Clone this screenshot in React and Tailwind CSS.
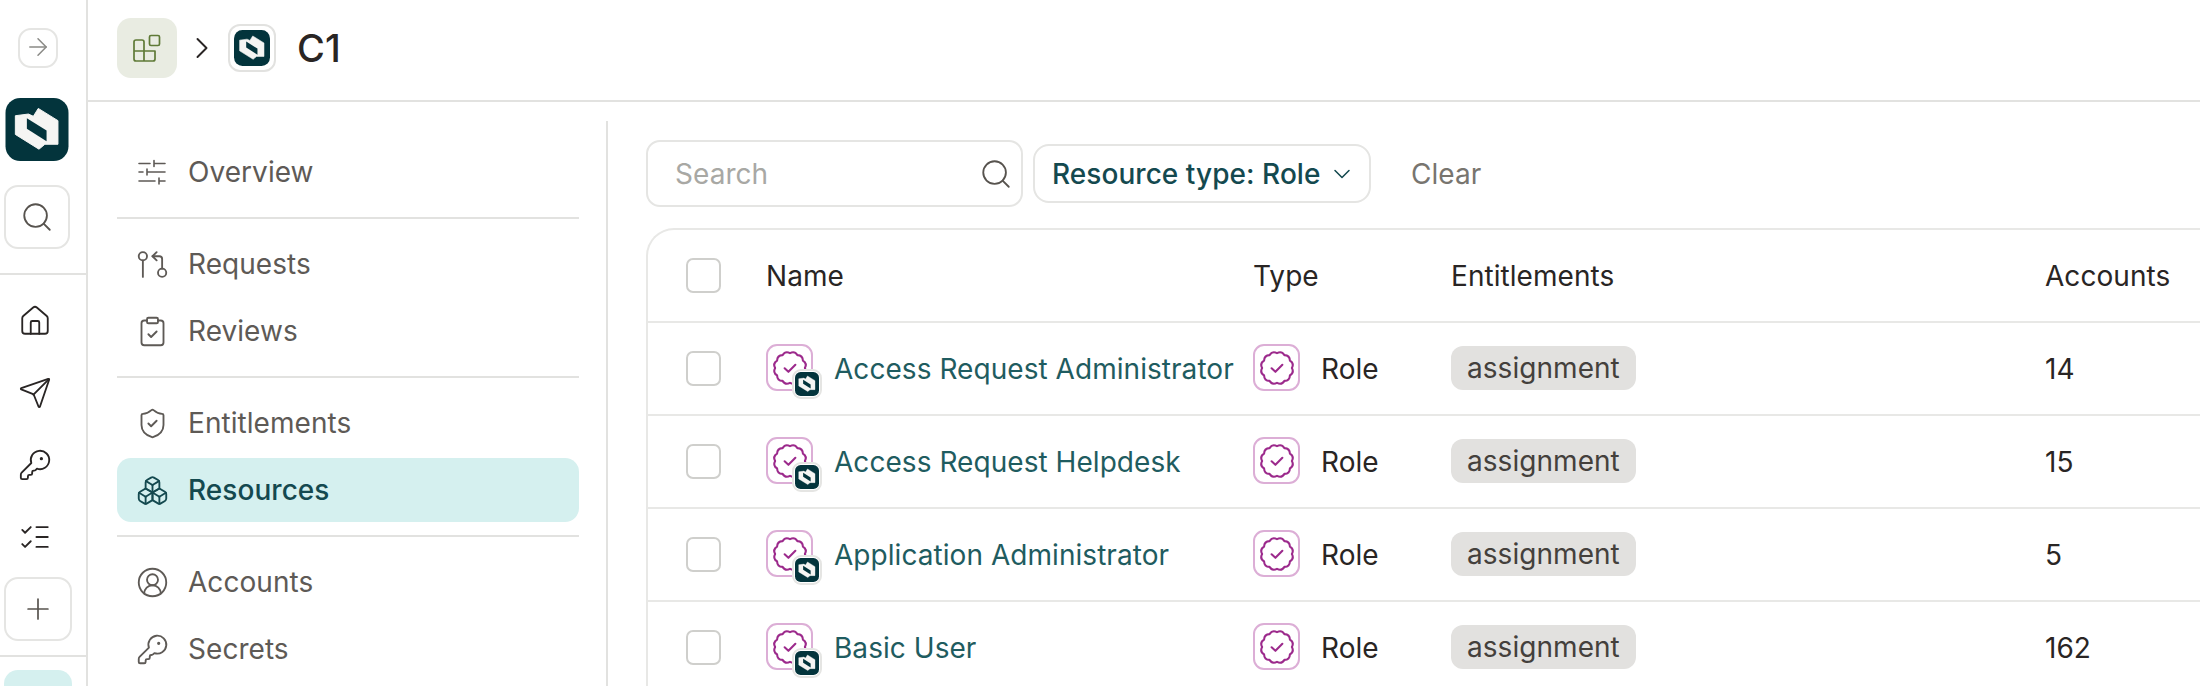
import React from "react";
import {
  ArrowRight,
  Search,
  House,
  Send,
  KeyRound,
  ListChecks,
  Plus,
  ChevronRight,
  ChevronDown,
  GitPullRequestArrow,
  ClipboardCheck,
  ShieldCheck,
  Boxes,
  CircleUserRound,
} from "lucide-react";

const Logo = ({ className }) => (
  <svg viewBox="0 0 64 64" className={className}>
    <rect width="64" height="64" rx="15" fill="#03343c" />
    <path
      d="M10 18L23.3 16.3L28.3 18.6L33.3 10.6L53.3 23V47H40L34 52L10 37Z"
      fill="#f5f5f3"
      stroke="#f5f5f3"
      strokeLinejoin="round"
    />
    <path d="M21.7 20.6L41.7 33V44L21.7 31.3Z" fill="#03343c" />
  </svg>
);

// wavy seal outline, 12 bumps
const sealPath = (() => {
  const n = 12;
  const c = 12;
  let d = "";
  for (let i = 0; i < n; i++) {
    const a0 = (i / n) * Math.PI * 2;
    const a1 = ((i + 0.5) / n) * Math.PI * 2;
    const a2 = ((i + 1) / n) * Math.PI * 2;
    const p = (a, r) => `${(c + r * Math.cos(a)).toFixed(2)} ${(c + r * Math.sin(a)).toFixed(2)}`;
    if (i === 0) d += `M${p(a0, 9.4)}`;
    d += `Q${p(a1, 11.4)} ${p(a2, 9.4)}`;
  }
  return d + "Z";
})();

const RoleIcon = () => (
  <div className="flex h-[47px] w-[47px] items-center justify-center rounded-[11px] border-2 border-[#dcaed6] bg-white">
    <svg viewBox="0 0 24 24" className="h-[38px] w-[38px] shrink-0" fill="none" stroke="#9c2a8c" strokeWidth="1.3" strokeLinecap="round" strokeLinejoin="round">
      <path d={sealPath} />
      <path d="M8.6 12.2L11 14.4L15.4 10" />
    </svg>
  </div>
);

const OverviewIcon = () => (
  <svg viewBox="0 0 28 28" className="h-[28px] w-[28px] shrink-0" fill="none" stroke="currentColor" strokeWidth="1.6" strokeLinecap="round">
    <path d="M1 5.5H12M16 5.5H27M16 2.5V8.5M1 14H5M9 14H27M9 11V17M1 23H17M21 23H27M21 20V26" />
  </svg>
);

const AppsIcon = () => (
  <svg viewBox="0 0 28 28" className="h-[28px] w-[28px]" fill="none" stroke="#5f7a37" strokeWidth="1.7" strokeLinejoin="round">
    <rect x="16.5" y="1.5" width="10" height="10" rx="1.5" />
    <path d="M1 8a2 2 0 0 1 2-2H9a2 2 0 0 1 2 2V27H3a2 2 0 0 1-2-2ZM1 17H22V25a2 2 0 0 1-2 2H3a2 2 0 0 1-2-2Z" />
  </svg>
);

const navGroups = [
  [{ label: "Overview", icon: OverviewIcon }],
  [
    { label: "Requests", icon: GitPullRequestArrow },
    { label: "Reviews", icon: ClipboardCheck },
  ],
  [
    { label: "Entitlements", icon: ShieldCheck },
    { label: "Resources", icon: Boxes, active: true },
  ],
  [
    { label: "Accounts", icon: CircleUserRound },
    { label: "Secrets", icon: KeyRound },
  ],
];

const rows = [
  { name: "Access Request Administrator", accounts: "14" },
  { name: "Access Request Helpdesk", accounts: "15" },
  { name: "Application Administrator", accounts: "5" },
  { name: "Basic User", accounts: "162" },
];

const Checkbox = () => (
  <div className="h-[35px] w-[35px] rounded-[7px] border-2 border-[#cfcfcc] bg-white" />
);

const NavItem = ({ item }) => {
  const Icon = item.icon;
  return (
    <div
      className={
        item.active
          ? "flex h-[64px] items-center gap-[22px] rounded-[14px] bg-[#d5f0ef] pl-[21px] text-[#14494f] font-medium"
          : "flex h-[64px] items-center gap-[22px] pl-[21px] text-[#5e5a56]"
      }
    >
      <div className="flex w-[28px] shrink-0 justify-center">
        <Icon size={33} strokeWidth={1.35} className="shrink-0" />
      </div>
      <span>{item.label}</span>
    </div>
  );
};

export default function App() {
  return (
    <div className="flex h-[686px] w-[2200px] overflow-hidden bg-white font-['Inter',sans-serif] text-[28px] tracking-[0.05px] text-[#292524]">
      <div className="flex w-[88px] shrink-0 flex-col overflow-hidden border-r-2 border-[#e2e2e0] *:shrink-0">
        <div className="ml-[18px] mt-[28px] flex h-[40px] w-[40px] items-center justify-center rounded-[13px] border-2 border-[#e5e5e3] pb-[2px] text-[#8a8a86]">
          <ArrowRight size={28} strokeWidth={1.3} className="shrink-0" />
        </div>
        <Logo className="ml-[5px] mt-[30px] h-[63px] w-[64px]" />
        <div className="ml-[4px] mt-[24px] flex h-[64px] w-[66px] items-center justify-center rounded-[14px] border-2 border-[#e5e5e3] text-[#57534e]">
          <Search size={34} strokeWidth={1.3} className="shrink-0" />
        </div>
        <div className="mt-[24px] h-[2px] w-full bg-[#e2e2e0]" />
        <div className="mt-[10px] flex flex-col items-center pr-[16px] text-[#292524]">
          <div className="flex h-[72px] items-center"><House size={34} strokeWidth={1.3} /></div>
          <div className="flex h-[72px] items-center"><Send size={34} strokeWidth={1.3} /></div>
          <div className="flex h-[72px] items-center"><KeyRound size={34} strokeWidth={1.3} /></div>
          <div className="flex h-[72px] items-center"><ListChecks size={34} strokeWidth={1.3} /></div>
        </div>
        <div className="ml-[4px] mt-[4px] flex h-[64px] w-[68px] items-center justify-center rounded-[14px] border-2 border-[#e5e5e3] text-[#57534e]">
          <Plus size={34} strokeWidth={1.2} className="shrink-0" />
        </div>
        <div className="mt-[14px] h-[2px] w-full bg-[#e2e2e0]" />
        <div className="ml-[4px] mt-[13px] h-[64px] w-[68px] rounded-[14px] bg-[#d5f0ef]" />
      </div>

      <div className="flex min-w-0 flex-1 flex-col">
        <div className="flex h-[102px] shrink-0 items-center border-b-2 border-[#e2e2e0] pb-[4px] pl-[29px]">
          <div className="flex h-[60px] w-[60px] items-center justify-center rounded-[14px] bg-[#e9ece2]">
            <AppsIcon />
          </div>
          <ChevronRight size={36} strokeWidth={1.3} className="ml-[7px] text-[#292524]" />
          <div className="ml-[8px] flex h-[48px] w-[48px] items-center justify-center rounded-[12px] border-2 border-[#e2e2e0]">
            <Logo className="h-[36px] w-[36px]" />
          </div>
          <span className="ml-[21px] text-[38px] font-medium leading-none">C1</span>
        </div>

        <div className="flex min-h-0 flex-1">
          <div className="mt-[19px] w-[520px] shrink-0 border-r-2 border-[#e2e2e0] pl-[29px] pr-[27px] pt-[19px]">
            {navGroups.map((group, i) => (
              <div key={i}>
                {i > 0 && <div className="my-[13px] h-[2px] bg-[#e2e2e0]" />}
                <div className="flex flex-col gap-[3px]">
                  {group.map((item) => (
                    <NavItem key={item.label} item={item} />
                  ))}
                </div>
              </div>
            ))}
          </div>

          <div className="min-w-0 flex-1 pl-[38px] pt-[38px]">
            <div className="flex h-[67px] items-center">
              <div className="flex h-[67px] w-[377px] items-center justify-between rounded-[14px] border-2 border-[#e5e5e3] pl-[27px] pr-[8px]">
                <span className="text-[#a8a8a4]">Search</span>
                <Search size={34} strokeWidth={1.3} className="text-[#57534e]" />
              </div>
              <div className="ml-[10px] flex h-[59px] w-[338px] items-center gap-[8px] rounded-[16px] border-2 border-[#e5e5e3] pl-[17px] font-medium text-[#14494f]">
                <span>Resource type: Role</span>
                <ChevronDown size={28} strokeWidth={1.3} className="shrink-0" />
              </div>
              <span className="ml-[40px] text-[#78756f]">Clear</span>
            </div>

            <div className="mt-[21px] rounded-tl-[28px] border-l-2 border-t-2 border-[#e8e8e6]">
              <div className="grid h-[91px] grid-cols-[80px_487px_198px_594px_1fr] items-center pl-[38px]">
                <Checkbox />
                <span>Name</span>
                <span>Type</span>
                <span>Entitlements</span>
                <span>Accounts</span>
              </div>
              {rows.map((row) => (
                <div
                  key={row.name}
                  className="grid h-[93px] grid-cols-[80px_487px_198px_594px_1fr] items-center border-t-2 border-[#e8e8e6] pl-[38px]"
                >
                  <Checkbox />
                  <div className="flex items-center gap-[21px]">
                    <div className="relative mb-[2px]">
                      <RoleIcon />
                      <div className="absolute -bottom-[8px] -right-[9px] flex h-[30px] w-[30px] items-center justify-center rounded-[9px] border-2 border-[#e5e5e3] bg-white">
                        <Logo className="h-[24px] w-[24px] shrink-0" />
                      </div>
                    </div>
                    <span className="text-[#1f5c60]">{row.name}</span>
                  </div>
                  <div className="flex items-center gap-[21px]">
                    <div className="mb-[2px]">
                      <RoleIcon />
                    </div>
                    <span>Role</span>
                  </div>
                  <div className="mb-[2px]">
                    <span className="inline-flex h-[44px] items-center rounded-[12px] bg-[#e2e1df] px-[16px] text-[#44403c]">
                      assignment
                    </span>
                  </div>
                  <span>{row.accounts}</span>
                </div>
              ))}
            </div>
          </div>
        </div>
      </div>
    </div>
  );
}
